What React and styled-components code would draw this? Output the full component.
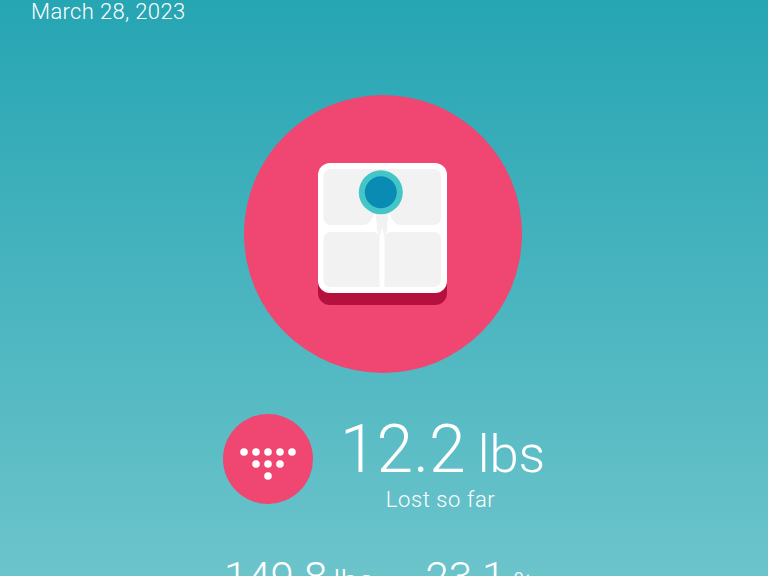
import React from 'react';
import styled, { createGlobalStyle } from 'styled-components';

const GlobalStyle = createGlobalStyle`
  html, body {
    margin: 0;
    height: 100%;
    overflow: hidden;
  }
`;

const Screen = styled.div`
  width: 768px;
  height: 576px;
  overflow: hidden;
  box-sizing: border-box;
  padding: 1px 31px 0;
  display: flex;
  flex-direction: column;
  background: linear-gradient(180deg, #26a5b3 0%, #6cc4cb 100%);
  color: #fff;
  font-family: Roboto, "Liberation Sans", sans-serif;
  font-weight: 300;
`;

const DateLine = styled.div`
  font-size: 22px;
  line-height: 22px;
  height: 22px;
  letter-spacing: 0.35px;
`;

const Hero = styled.div`
  margin: 72px 0 0 213px;
  width: 278px;
  height: 278px;
  border-radius: 50%;
  background: #ef4672;
  display: flex;
  align-items: center;
  justify-content: center;
  flex-shrink: 0;
`;

const Summary = styled.div`
  margin: 41px 0 0 192px;
  display: flex;
  align-items: flex-start;
  gap: 27px;
`;

const Badge = styled.div`
  width: 90px;
  height: 90px;
  border-radius: 50%;
  background: #ef4672;
  display: flex;
  align-items: center;
  justify-content: center;
  flex-shrink: 0;
`;

const SummaryText = styled.div`
  display: flex;
  flex-direction: column;
  align-items: center;
  padding-top: 3px;
`;

const Value = styled.div`
  font-size: ${p => p.$size}px;
  line-height: ${p => p.$size}px;
  white-space: nowrap;
  font-weight: 300;
`;

const Unit = styled.span`
  font-size: ${p => p.$size}px;
  margin-left: ${p => p.$gap}px;
`;

const Caption = styled.div`
  font-size: 22px;
  line-height: 24px;
  letter-spacing: 0.6px;
  margin: 1px 4px 0 0;
`;

const Stats = styled.div`
  margin: 45px 0 0 193px;
  display: flex;
  gap: 51px;
`;

const ScaleIcon = () => (
  <svg width="130" height="142" viewBox="0 0 130 142">
    <rect x="0" y="12" width="129" height="130" rx="12" fill="#b5113f" />
    <rect x="0" y="0" width="129" height="130" rx="12" fill="#fff" />
    <rect x="5.5" y="6" width="117.5" height="56" rx="7" fill="#f2f2f2" />
    <path d="M58 58 Q59 69 61.5 74 L64 65 L66.5 74 Q69 69 70 58 Z" fill="#f2f2f2" />
    <path d="M46 62 Q54 61 57 48 L59 62 Z" fill="#fff" />
    <path d="M82 62 Q74 61 71 48 L69 62 Z" fill="#fff" />
    <path d="M12.5 69 H55 Q61.5 69 61.5 76 V124 H12.5 A7 7 0 0 1 5.5 117 V76 A7 7 0 0 1 12.5 69 Z" fill="#f2f2f2" />
    <path d="M116 69 H73 Q66.5 69 66.5 76 V124 H116 A7 7 0 0 0 123 117 V76 A7 7 0 0 0 116 69 Z" fill="#f2f2f2" />
    <circle cx="62.8" cy="29.3" r="22" fill="#44c5c8" />
    <circle cx="62.8" cy="29.3" r="16" fill="#0a8bb3" />
  </svg>
);

const dots = [
  [-24, 0], [-12, 0], [0, 0], [12, 0], [24, 0],
  [-12, 12], [0, 12], [12, 12],
  [0, 24],
];

const DotsIcon = () => (
  <svg width="60" height="60" viewBox="-30 -23 60 60">
    {dots.map(([x, y]) => <circle key={`${x}-${y}`} cx={x} cy={y} r="3.8" fill="#fff" />)}
  </svg>
);

export default function App() {
  return (
    <Screen>
      <GlobalStyle />
      <DateLine>March 28, 2023</DateLine>
      <Hero><ScaleIcon /></Hero>
      <Summary>
        <Badge><DotsIcon /></Badge>
        <SummaryText>
          <Value $size={66}>12.2<Unit $size={52.5} $gap={12}>lbs</Unit></Value>
          <Caption>Lost so far</Caption>
        </SummaryText>
      </Summary>
      <Stats>
        <Value $size={42}>149.8<Unit $size={32} $gap={6}>lbs</Unit></Value>
        <Value $size={42}>23.1<Unit $size={28} $gap={8}>%</Unit></Value>
      </Stats>
    </Screen>
  );
}
